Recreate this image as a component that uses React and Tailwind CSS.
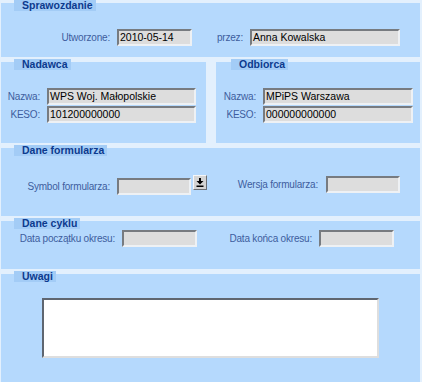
import React from "react";

const font = { fontFamily: '"Liberation Sans", Arial, sans-serif' };

function Tab({ children, className = "" }) {
  return (
    <div
      className={
        "absolute top-[-3px] left-[13px] h-[11px] bg-[#a3ccf6] pl-[8px] pr-[3px] text-[10.5px] font-bold leading-[11px] text-[#0c3a8e] " +
        className
      }
    >
      {children}
    </div>
  );
}

function Label({ children, className = "" }) {
  return (
    <span
      className={
        "shrink-0 text-right text-[10px] leading-[17px] tracking-[-0.2px] text-[#3d5d9e] " +
        className
      }
    >
      {children}
    </span>
  );
}

function Input({ value = "", className = "" }) {
  return (
    <div
      className={
        "h-[17px] shrink-0 overflow-hidden border-t-[2px] border-l-[2px] border-b-[2px] border-r-[2px] border-t-[#777b80] border-l-[#777b80] border-b-[#eef1f4] border-r-[#eef1f4] bg-[#dddddd] pl-[1px] text-[10.5px] leading-[13px] text-black " +
        className
      }
    >
      {value}
    </div>
  );
}

function Panel({ children, className = "" }) {
  return (
    <div className={"relative bg-[#b5d9fd] " + className}>{children}</div>
  );
}

export default function App() {
  return (
    <div
      style={font}
      className="flex h-[382px] w-[422px] flex-col gap-[5px] overflow-hidden bg-[#e3f0fd] pt-[3px] pl-[1px] pr-[2px]"
    >
      {/* Sprawozdanie */}
      <Panel className="h-[54px] shrink-0">
        <Tab>Sprawozdanie</Tab>
        <div className="flex items-center pt-[26px]">
          <Label className="w-[109px]">Utworzone:</Label>
          <Input className="ml-[7px] w-[75px]" value="2010-05-14" />
          <Label className="w-[51px]">przez:</Label>
          <Input className="ml-[7px] w-[150px]" value="Anna Kowalska" />
        </div>
      </Panel>

      {/* Nadawca / Odbiorca */}
      <div className="flex h-[81px] shrink-0 gap-[10px]">
        <Panel className="w-[205px] shrink-0">
          <Tab>Nadawca</Tab>
          <div className="flex flex-col gap-[1px] pt-[26px]">
            <div className="flex items-center">
              <Label className="w-[39px]">Nazwa:</Label>
              <Input className="ml-[7px] w-[149px]" value="WPS Woj. Małopolskie" />
            </div>
            <div className="flex items-center">
              <Label className="w-[39px]">KESO:</Label>
              <Input className="ml-[7px] w-[149px]" value="101200000000" />
            </div>
          </div>
        </Panel>
        <Panel className="flex-1">
          <Tab className="left-[15px]">Odbiorca</Tab>
          <div className="flex flex-col gap-[1px] pt-[26px]">
            <div className="flex items-center">
              <Label className="w-[40px]">Nazwa:</Label>
              <Input className="ml-[7px] w-[150px]" value="MPiPS Warszawa" />
            </div>
            <div className="flex items-center">
              <Label className="w-[40px]">KESO:</Label>
              <Input className="ml-[7px] w-[150px]" value="000000000000" />
            </div>
          </div>
        </Panel>
      </div>

      {/* Dane formularza */}
      <Panel className="h-[68px] shrink-0">
        <Tab>Dane formularza</Tab>
        <div className="flex items-start pt-[27px]">
          <Label className="mt-[3px] w-[109px]">Symbol formularza:</Label>
          <Input className="ml-[7px] mt-[3px] w-[74px]" />
          <div className="ml-[2px] flex h-[15px] w-[14px] shrink-0 items-center justify-center border border-t-[#f4f6f8] border-l-[#f4f6f8] border-b-[#6b6f75] border-r-[#6b6f75] bg-[#d4d4d4]">
            <svg width="8" height="9" viewBox="0 0 8 9">
              <rect x="3" y="0" width="2" height="3" fill="#000" />
              <path d="M0.5 3 H7.5 L4 6.5 Z" fill="#000" />
              <rect x="0.5" y="7.5" width="7" height="1.5" fill="#000" />
            </svg>
          </div>
          <Label className="mt-[1px] w-[111px]">Wersja formularza:</Label>
          <Input className="ml-[8px] mt-[1px] w-[74px]" />
        </div>
      </Panel>

      {/* Dane cyklu */}
      <Panel className="h-[48px] shrink-0">
        <Tab>Dane cyklu</Tab>
        <div className="flex items-center pt-[9px]">
          <Label className="w-[114px]">Data początku okresu:</Label>
          <Input className="ml-[7px] w-[75px]" />
          <Label className="w-[115px]">Data końca okresu:</Label>
          <Input className="ml-[7px] w-[75px]" />
        </div>
      </Panel>

      {/* Uwagi */}
      <Panel className="flex-1">
        <Tab>Uwagi</Tab>
        <div className="pl-[41px] pt-[24px]">
          <div className="h-[60px] w-[337px] border-t-[2px] border-l-[2px] border-b-[2px] border-r-[2px] border-t-[#5f6670] border-l-[#5f6670] border-b-[#dedede] border-r-[#dedede] bg-white" />
        </div>
      </Panel>
    </div>
  );
}
